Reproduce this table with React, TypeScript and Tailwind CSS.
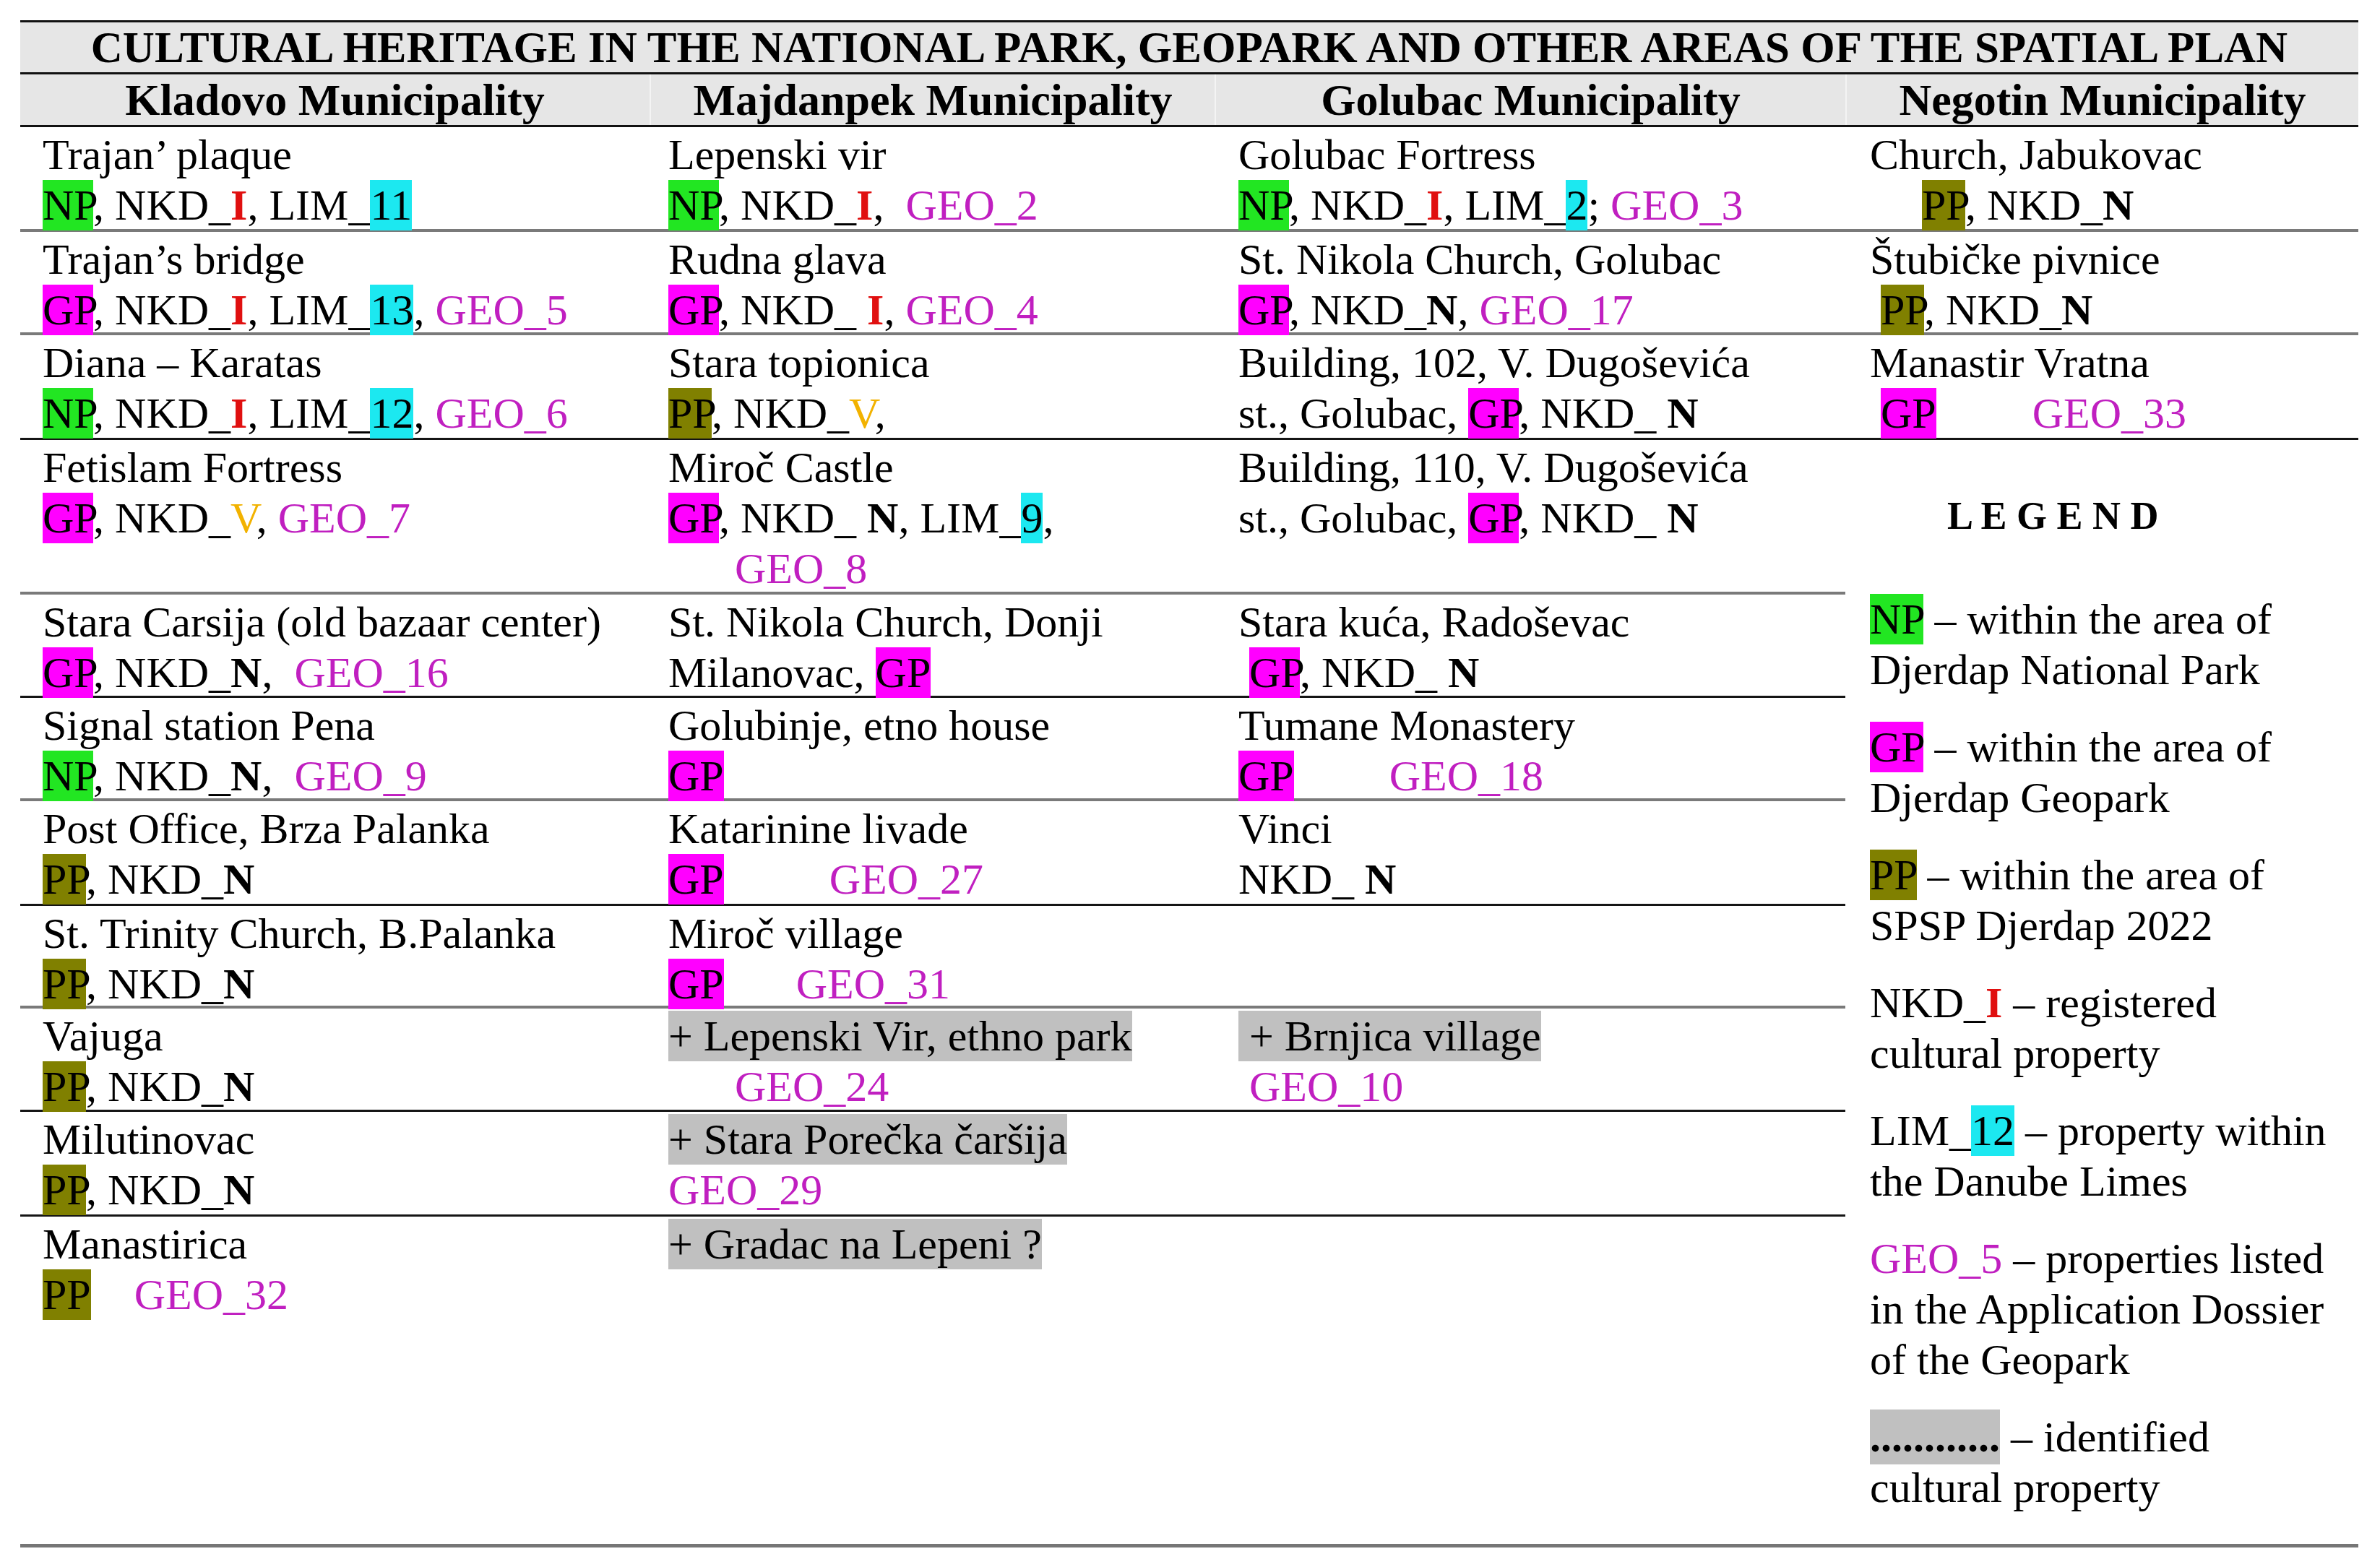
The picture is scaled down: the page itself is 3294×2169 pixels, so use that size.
import React from "react";

// highlight chips used inside the table cells
const NP = () => <span className="bg-[#22e622] py-[2px]">NP</span>;
const GP = ({ className = "" }: { className?: string }) => (
  <span className={`bg-[#ff00ff] py-[2px] ${className}`}>GP</span>
);
const PP = ({ className = "" }: { className?: string }) => (
  <span className={`bg-[#808000] py-[2px] ${className}`}>PP</span>
);
const Lim = ({ n }: { n: string }) => (
  <span className="bg-[#1ce8f0] py-[2px]">{n}</span>
);
const RedI = () => <span className="font-bold text-[#e01010]">I</span>;
const V = () => <span className="text-[#f2b200]">V</span>;
const N = () => <span className="font-bold">N</span>;
const Geo = ({ n, className = "" }: { n: string; className?: string }) => (
  <span className={`text-[#c01fc0] ${className}`}>GEO_{n}</span>
);
const Idf = ({ children }: { children: React.ReactNode }) => (
  <span className="bg-[#c0c0c0] py-[2px]">{children}</span>
);

type Row = { border: string; cells: React.ReactNode[] };

const GRAY = "border-b-[4px] border-[#7a7a7a]";
const BLACK = "border-b-[3px] border-[#151515]";

const rows: Row[] = [
  {
    border: GRAY,
    cells: [
      <><div>Trajan’ plaque</div><div><NP />, NKD_<RedI />, LIM_<Lim n="11" /></div></>,
      <><div>Lepenski vir</div><div><NP />, NKD_<RedI />,{"  "}<Geo n="2" /></div></>,
      <><div>Golubac Fortress</div><div><NP />, NKD_<RedI />, LIM_<Lim n="2" />; <Geo n="3" /></div></>,
      <><div>Church, Jabukovac</div><div><PP className="ml-[72px]" />, NKD_<N /></div></>,
    ],
  },
  {
    border: GRAY,
    cells: [
      <><div>Trajan’s bridge</div><div><GP />, NKD_<RedI />, LIM_<Lim n="13" />, <Geo n="5" /></div></>,
      <><div>Rudna glava</div><div><GP />, NKD_ <RedI />, <Geo n="4" /></div></>,
      <><div>St. Nikola Church, Golubac</div><div><GP />, NKD_<N />, <Geo n="17" /></div></>,
      <><div>Štubičke pivnice</div><div>{" "}<PP />, NKD_<N /></div></>,
    ],
  },
  {
    border: BLACK,
    cells: [
      <><div>Diana – Karatas</div><div><NP />, NKD_<RedI />, LIM_<Lim n="12" />, <Geo n="6" /></div></>,
      <><div>Stara topionica</div><div><PP />, NKD_<V />,</div></>,
      <><div>Building, 102, V. Dugoševića</div><div>st., Golubac, <GP />, NKD_ <N /></div></>,
      <><div>Manastir Vratna</div><div>{" "}<GP /><Geo n="33" className="ml-[133px]" /></div></>,
    ],
  },
  {
    border: GRAY,
    cells: [
      <><div>Fetislam Fortress</div><div><GP />, NKD_<V />, <Geo n="7" /></div></>,
      <><div>Miroč Castle</div><div><GP />, NKD_ <N />, LIM_<Lim n="9" />,</div><div><Geo n="8" className="ml-[92px]" /></div></>,
      <><div>Building, 110, V. Dugoševića</div><div>st., Golubac, <GP />, NKD_ <N /></div></>,
    ],
  },
  {
    border: BLACK,
    cells: [
      <><div>Stara Carsija (old bazaar center)</div><div><GP />, NKD_<N />,{"  "}<Geo n="16" /></div></>,
      <><div>St. Nikola Church, Donji</div><div>Milanovac, <GP /></div></>,
      <><div>Stara kuća, Radoševac</div><div>{" "}<GP />, NKD_ <N /></div></>,
    ],
  },
  {
    border: GRAY,
    cells: [
      <><div>Signal station Pena</div><div><NP />, NKD_<N />,{"  "}<Geo n="9" /></div></>,
      <><div>Golubinje, etno house</div><div><GP /></div></>,
      <><div>Tumane Monastery</div><div><GP /><Geo n="18" className="ml-[132px]" /></div></>,
    ],
  },
  {
    border: BLACK,
    cells: [
      <><div>Post Office, Brza Palanka</div><div><PP />, NKD_<N /></div></>,
      <><div>Katarinine livade</div><div><GP /><Geo n="27" className="ml-[146px]" /></div></>,
      <><div>Vinci</div><div>NKD_ <N /></div></>,
    ],
  },
  {
    border: GRAY,
    cells: [
      <><div>St. Trinity Church, B.Palanka</div><div><PP />, NKD_<N /></div></>,
      <><div>Miroč village</div><div><GP /><Geo n="31" className="ml-[100px]" /></div></>,
      null,
    ],
  },
  {
    border: BLACK,
    cells: [
      <><div>Vajuga</div><div><PP />, NKD_<N /></div></>,
      <><div><Idf>+ Lepenski Vir, ethno park</Idf></div><div><Geo n="24" className="ml-[92px]" /></div></>,
      <><div><Idf> + Brnjica village</Idf></div><div>{" "}<Geo n="10" /></div></>,
    ],
  },
  {
    border: BLACK,
    cells: [
      <><div>Milutinovac</div><div><PP />, NKD_<N /></div></>,
      <><div><Idf>+ Stara Porečka čaršija</Idf></div><div><Geo n="29" /></div></>,
      null,
    ],
  },
  {
    border: "",
    cells: [
      <><div>Manastirica</div><div><PP /><Geo n="32" className="ml-[60px]" /></div></>,
      <><div><Idf>+ Gradac na Lepeni ?</Idf></div></>,
      null,
    ],
  },
];

const colPad = ["pl-[31px]", "pl-[26px]", "pl-[33px]", "pl-[34px]"];

function Legend() {
  return (
    <div className="col-start-4 row-start-4 row-span-8 pl-[34px] pt-[70px] whitespace-pre">
      <div className="pl-[107px] text-[54px] font-bold">L E G E N D</div>
      <div className="mt-[73px]">
        <div><NP /> – within the area of</div>
        <div>Djerdap National Park</div>
      </div>
      <div className="mt-[37px]">
        <div><GP /> – within the area of</div>
        <div>Djerdap Geopark</div>
      </div>
      <div className="mt-[37px]">
        <div><PP /> – within the area of</div>
        <div>SPSP Djerdap 2022</div>
      </div>
      <div className="mt-[37px]">
        <div>NKD_<RedI /> – registered</div>
        <div>cultural property</div>
      </div>
      <div className="mt-[37px]">
        <div>LIM_<Lim n="12" /> – property within</div>
        <div>the Danube Limes</div>
      </div>
      <div className="mt-[37px]">
        <div><Geo n="5" /> – properties listed</div>
        <div>in the Application Dossier</div>
        <div>of the Geopark</div>
      </div>
      <div className="mt-[37px]">
        <div><span className="bg-[#c0c0c0] font-bold py-[5px]">............</span> – identified</div>
        <div>cultural property</div>
      </div>
    </div>
  );
}

export default function App() {
  return (
    <div className="w-[3294px] h-[2169px] bg-white text-black overflow-hidden pt-[28px] pl-[28px] font-['Liberation_Serif',serif]">
      <div className="w-[3236px]">
        <div className="border-t-[3px] border-b-[3px] border-[#111] bg-[#e6e6e6] h-[75px] text-center text-[61px] font-bold leading-[69px] whitespace-nowrap">
          CULTURAL HERITAGE IN THE NATIONAL PARK, GEOPARK AND OTHER AREAS OF THE SPATIAL PLAN
        </div>
        <div className="grid grid-cols-[871px_782px_873px_710px] h-[73px] bg-[#e6e6e6] border-b-[3px] border-[#111] text-[62px] font-bold leading-[70px] text-center">
          <div>Kladovo Municipality</div>
          <div className="border-l-2 border-[#f4f4f4]">Majdanpek Municipality</div>
          <div className="border-l-2 border-[#f4f4f4]">Golubac Municipality</div>
          <div className="border-l-2 border-[#f4f4f4]">Negotin Municipality</div>
        </div>
        <div className="grid grid-cols-[871px_782px_873px_710px] grid-rows-[145px_143px_145px_214px_143px_143px_145px_142px_143px_145px_453px] border-b-[5px] border-[#767676] text-[60px] leading-[70px]">
          <Legend />
          {rows.map((row, ri) =>
            row.cells.map((cell, ci) => (
              <div
                key={`${ri}-${ci}`}
                className={`${colPad[ci]} pt-[3px] whitespace-pre ${row.border}`}
              >
                {cell}
              </div>
            ))
          )}
        </div>
      </div>
    </div>
  );
}
